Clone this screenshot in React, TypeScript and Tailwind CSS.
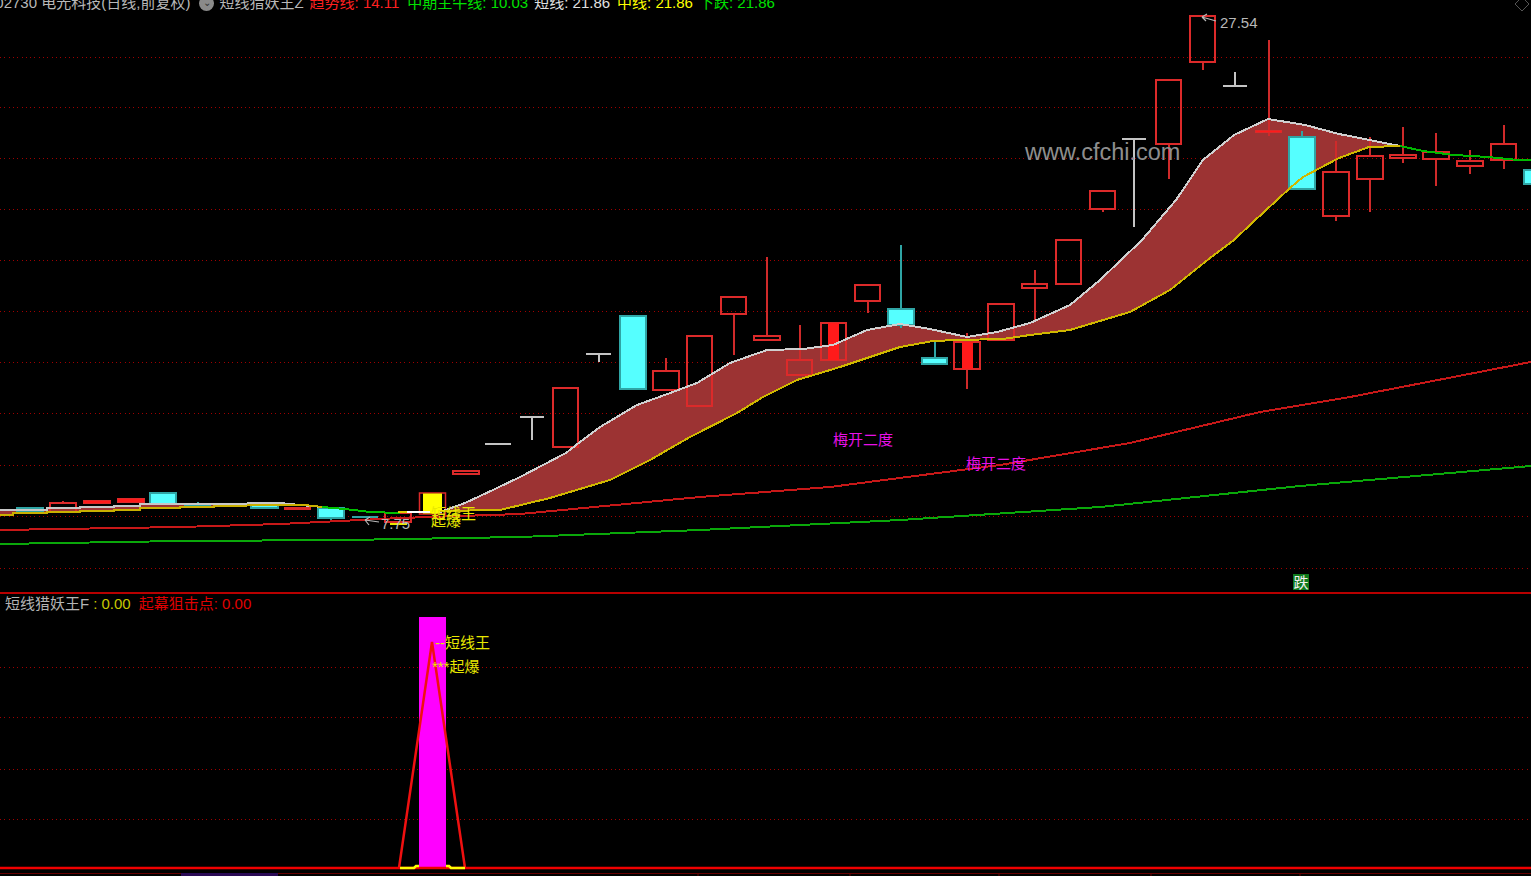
const RED = "#dc2a2a";
const CYAN = "#55ffff";
const CYAN_EDGE = "#2fa5a5";
const WHITE = "#c4c4c4";

type Candle = {
  l: number;
  r: number;
  t: number;
  b: number;
  hi?: number;
  lo?: number;
  k: "red" | "cyan" | "white";
  fill?: [number, number];
};

// left, right, body top, body bottom, wick ends
const candles: Candle[] = [
  { l: 17, r: 43, t: 508, b: 512, hi: 507, lo: 513, k: "cyan" },
  { l: 50, r: 76, t: 503, b: 512, hi: 501, k: "red" },
  { l: 84, r: 110, t: 501, b: 503, k: "red", fill: [84, 110] },
  { l: 118, r: 144, t: 499, b: 502, k: "red", fill: [118, 144] },
  { l: 150, r: 176, t: 493, b: 504, k: "cyan" },
  { l: 185, r: 210, t: 504, b: 505, hi: 502, lo: 507, k: "cyan" },
  { l: 251, r: 278, t: 505, b: 508, k: "cyan" },
  { l: 285, r: 310, t: 508, b: 509, hi: 507, k: "red" },
  { l: 318, r: 344, t: 508, b: 518, lo: 520, k: "cyan" },
  { l: 352, r: 378, t: 517, b: 517, k: "cyan" },
  { l: 385, r: 411, t: 513, b: 522, k: "red" },
  { l: 453, r: 479, t: 471, b: 474, k: "red" },
  { l: 485, r: 511, t: 444, b: 444, k: "white" },
  { l: 520, r: 544, t: 417, b: 417, lo: 440, k: "white" },
  { l: 553, r: 578, t: 388, b: 447, k: "red" },
  { l: 586, r: 611, t: 354, b: 354, lo: 362, k: "white" },
  { l: 620, r: 646, t: 316, b: 389, k: "cyan" },
  { l: 653, r: 679, t: 371, b: 390, hi: 358, k: "red" },
  { l: 687, r: 712, t: 336, b: 406, k: "red" },
  { l: 721, r: 746, t: 297, b: 314, lo: 355, k: "red" },
  { l: 754, r: 780, t: 336, b: 340, hi: 257, k: "red" },
  { l: 787, r: 812, t: 360, b: 375, hi: 325, k: "red" },
  { l: 821, r: 846, t: 323, b: 360, k: "red", fill: [828, 839] },
  { l: 855, r: 880, t: 285, b: 301, lo: 313, k: "red" },
  { l: 888, r: 914, t: 309, b: 325, hi: 245, lo: 328, k: "cyan" },
  { l: 922, r: 947, t: 358, b: 364, hi: 342, k: "cyan" },
  { l: 954, r: 980, t: 342, b: 369, hi: 333, lo: 389, k: "red", fill: [962, 973] },
  { l: 988, r: 1014, t: 304, b: 340, k: "red" },
  { l: 1022, r: 1047, t: 284, b: 288, hi: 270, lo: 320, k: "red" },
  { l: 1056, r: 1081, t: 240, b: 284, k: "red" },
  { l: 1090, r: 1115, t: 191, b: 209, lo: 212, k: "red" },
  { l: 1122, r: 1146, t: 139, b: 139, lo: 227, k: "white" },
  { l: 1156, r: 1181, t: 80, b: 144, lo: 179, k: "red" },
  { l: 1190, r: 1215, t: 16, b: 62, lo: 70, k: "red" },
  { l: 1223, r: 1247, t: 86, b: 86, hi: 72, k: "white" },
  { l: 1256, r: 1281, t: 131, b: 132, hi: 40, lo: 136, k: "red", fill: [1256, 1281] },
  { l: 1289, r: 1315, t: 137, b: 189, hi: 131, k: "cyan" },
  { l: 1323, r: 1349, t: 172, b: 216, hi: 141, lo: 221, k: "red" },
  { l: 1357, r: 1383, t: 156, b: 179, hi: 137, lo: 212, k: "red" },
  { l: 1390, r: 1416, t: 155, b: 158, hi: 127, lo: 163, k: "red" },
  { l: 1423, r: 1449, t: 152, b: 159, hi: 133, lo: 186, k: "red" },
  { l: 1457, r: 1483, t: 161, b: 166, hi: 150, lo: 174, k: "red" },
  { l: 1491, r: 1516, t: 144, b: 160, hi: 125, lo: 169, k: "red" },
  { l: 1524, r: 1537, t: 170, b: 184, k: "cyan" },
];

const upper = "0,510 47,510 47,508 80,508 80,507 114,507 114,506 140,506 140,504 214,504 280,503 300,505 322,507";
const upperMain =
  "440,512 465,503 495,489 520,477 566,453 580,442 600,427 637,405 673,392 697,383 730,363 767,350 803,349 833,345 867,330 900,324 930,329 967,337 997,332 1030,323 1070,305 1100,280 1142,240 1176,200 1203,160 1234,135 1268,119 1305,125 1339,134 1400,146";
const lower = "0,515 13,515 13,513 47,513 47,512 80,512 80,511 114,511 114,510 140,510 140,508 180,508 180,507 214,507 214,506 280,505 305,505 322,507";
const lowerMain =
  "440,511 500,510 550,498 610,480 650,460 690,437 737,413 763,397 797,380 840,367 900,347 933,341 957,340 1003,339 1030,335 1070,330 1130,312 1170,290 1210,258 1234,240 1252,223 1290,188 1303,177 1339,158 1369,147 1400,146";
const greenTail = "1400,146 1423,151 1454,155 1488,157 1518,160 1531,160";
const greenMid = "322,507 345,509 370,512 400,513";
const whiteMid = "407,512 430,512";
const yellowMid = "398,512 407,512";

const topGrid = [57, 107, 158, 209, 260, 311, 362, 413, 465, 516, 568];
const bottomGrid = [667, 717, 769, 819];

const CandleShape = ({ c }: { c: Candle }) => {
  const mid = Math.round((c.l + c.r) / 2);
  const edge = c.k === "red" ? RED : c.k === "cyan" ? CYAN_EDGE : WHITE;
  const wick = c.k === "red" ? "#cf2a2a" : c.k === "cyan" ? CYAN_EDGE : WHITE;
  return (
    <g shapeRendering="crispEdges">
      {c.hi !== undefined && <line x1={mid} x2={mid} y1={c.hi} y2={c.t} stroke={wick} strokeWidth="1.5" />}
      {c.lo !== undefined && <line x1={mid} x2={mid} y1={c.b} y2={c.lo} stroke={wick} strokeWidth="1.5" />}
      {c.t === c.b ? (
        <line x1={c.l} x2={c.r} y1={c.t} y2={c.t} stroke={edge} strokeWidth="1.5" />
      ) : (
        <rect
          x={c.l}
          y={c.t}
          width={c.r - c.l}
          height={c.b - c.t}
          fill={c.k === "cyan" ? CYAN : "none"}
          stroke={edge}
          strokeWidth="1.5"
        />
      )}
      {c.fill && <rect x={c.fill[0]} y={c.t} width={c.fill[1] - c.fill[0]} height={c.b - c.t} fill="#ff1a1a" />}
    </g>
  );
};

const Grid = ({ rows }: { rows: number[] }) => (
  <g shapeRendering="crispEdges">
    {rows.map((y) => (
      <line key={y} x1="0" x2="1531" y1={y + 0.5} y2={y + 0.5} stroke="#a00000" strokeDasharray="1 3.3" />
    ))}
  </g>
);

const Line = ({ pts, color, w = 2 }: { pts: string; color: string; w?: number }) => (
  <polyline points={pts} fill="none" stroke={color} strokeWidth={w} shapeRendering="crispEdges" />
);

export default function App() {
  return (
    <div className="flex h-[876px] w-full flex-col overflow-hidden bg-black font-['Liberation_Sans','Noto_Sans_CJK_SC',sans-serif]">
      {/* main k-line panel */}
      <div className="relative h-[592px] shrink-0">
        <svg viewBox="0 0 1531 592" className="block h-[592px] w-[1531px]">
          <Grid rows={topGrid} />
          <Line pts="0,530 180,527 280,524 400,518 520,514 700,497 830,487 1000,465 1130,443 1260,412 1350,397 1531,362" color="#c81818" />
          <Line pts="0,544 180,541 345,540 520,537 700,530 900,520 1100,507 1300,486 1531,466" color="#0aa80a" />
          <polygon points={`${upper} ${lower.split(" ").reverse().join(" ")}`} fill="#9c3333" />
          <polygon points={`${upperMain} ${lowerMain.split(" ").reverse().join(" ")}`} fill="#9c3333" />
          {candles.map((c) => (
            <CandleShape key={c.l} c={c} />
          ))}
          {/* yellow limit-up candle */}
          <rect x="419.5" y="493" width="26" height="21" fill="none" stroke={RED} strokeWidth="1.5" />
          <rect x="423" y="493.5" width="19" height="20" fill="#ffff00" />
          <rect x="218" y="504" width="28" height="2" fill="#e8a060" />
          <rect x="390" y="523" width="17" height="2" fill="#e8e800" />
          <Line pts={upper} color="#c8c8c8" />
          <Line pts={lower} color="#c9b000" />
          <Line pts={upperMain} color="#d0d0d0" />
          <Line pts={lowerMain} color="#d0b800" />
          <Line pts={greenMid} color="#00c000" />
          <Line pts={whiteMid} color="#ffffff" />
          <Line pts={yellowMid} color="#e0d000" />
          <Line pts={greenTail} color="#00b800" />
          {/* high and low arrows */}
          <path d="M1216 21 L1202 17 M1202 17 L1207 14 M1202 17 L1206 21" fill="none" stroke="#b8b8b8" strokeWidth="1.2" />
          <path d="M379 522 L365 520 M365 520 L370 517 M365 520 L369 525" fill="none" stroke="#b8b8b8" strokeWidth="1.2" />
          {/* corner marker */}
          <path d="M1522 -3 L1529 4 L1522 11 L1515 4 Z" fill="none" stroke="#555555" />
        </svg>

        <div className="absolute left-[-13px] top-[-7px] flex items-center whitespace-nowrap text-[15px] leading-[20px]">
          <span className="text-[#b8b8b8]">002730 电光科技(日线,前复权)</span>
          <span className="ml-[9px] flex h-[15px] w-[15px] items-center justify-center rounded-full bg-[#8a8a8a] text-[10px] leading-none text-[#333333]">
            ⌄
          </span>
          <span className="ml-[5px] text-[#b8b8b8]">短线猎妖王Z</span>
          <span className="ml-[6px] text-[#ff2020]">趋势线: 14.11</span>
          <span className="ml-[8px] text-[#00e000]">中期主牛线: 10.03</span>
          <span className="ml-[6px] text-[#e0e0e0]">短线: 21.86</span>
          <span className="ml-[7px] text-[#ffff00]">中线: 21.86</span>
          <span className="ml-[6px] text-[#00e000]">下跌: 21.86</span>
        </div>

        <span className="absolute left-[1025px] top-[138px] text-[23.5px] leading-[28px] text-[#8e8e8e]">www.cfchi.com</span>
        <span className="absolute left-[1220px] top-[15px] text-[15px] leading-[16px] text-[#b8b8b8]">27.54</span>
        <span className="absolute left-[381px] top-[516px] text-[15px] leading-[16px] text-[#b8b8b8]">7.75</span>
        <span className="absolute left-[431px] top-[506px] text-[15px] leading-[16px] text-[#e8e800]">短线王</span>
        <span className="absolute left-[431px] top-[513px] text-[15px] leading-[16px] text-[#e8e800]">起爆</span>
        <span className="absolute left-[833px] top-[432px] text-[15px] leading-[16px] text-[#e810e8]">梅开二度</span>
        <span className="absolute left-[966px] top-[456px] text-[15px] leading-[16px] text-[#e810e8]">梅开二度</span>
        <span className="absolute left-[1293px] top-[574px] flex h-[16px] w-[16px] items-center justify-center bg-[#0f7a1c] text-[15px] leading-none text-[#f0f0f0]">
          跌
        </span>
      </div>

      <div className="h-[2px] shrink-0 bg-[#b80000]" />

      {/* lower indicator panel */}
      <div className="relative flex-1">
        <svg viewBox="0 594 1531 282" className="block h-[282px] w-[1531px]">
          <Grid rows={bottomGrid} />
          <rect x="419" y="617" width="27" height="252" fill="#ff00ff" />
          <polyline points="399,868 432,642 465,868" fill="none" stroke="#f01010" strokeWidth="2.5" />
          <line x1="0" x2="1531" y1="868" y2="868" stroke="#f00000" strokeWidth="2.5" />
          <path d="M400 868 H414 L416 866 H419 M446 866 H449 L451 868 H465" fill="none" stroke="#ffff00" strokeWidth="2.5" />
          <line x1="0" x2="1531" y1="873.5" y2="873.5" stroke="#640000" />
          <rect x="181" y="873" width="97" height="3" fill="#2a0a55" />
          {[698, 850, 999, 1151, 1300].map((x) => (
            <line key={x} x1={x} x2={x} y1="873" y2="876" stroke="#640000" />
          ))}
        </svg>

        <div className="absolute left-[5px] top-[1px] flex items-center whitespace-nowrap text-[15px] leading-[18px]">
          <span className="text-[#b4b4b4]">短线猎妖王F</span>
          <span className="ml-[4px] text-[#c8c800]">: 0.00</span>
          <span className="ml-[8px] text-[#e00000]">起幕狙击点: 0.00</span>
        </div>
        <span className="absolute left-[435px] top-[41px] text-[15px] leading-[16px] text-[#e8e800]">--短线王</span>
        <span className="absolute left-[432px] top-[65px] text-[15px] leading-[16px] text-[#e8e800]">***起爆</span>
      </div>
    </div>
  );
}
